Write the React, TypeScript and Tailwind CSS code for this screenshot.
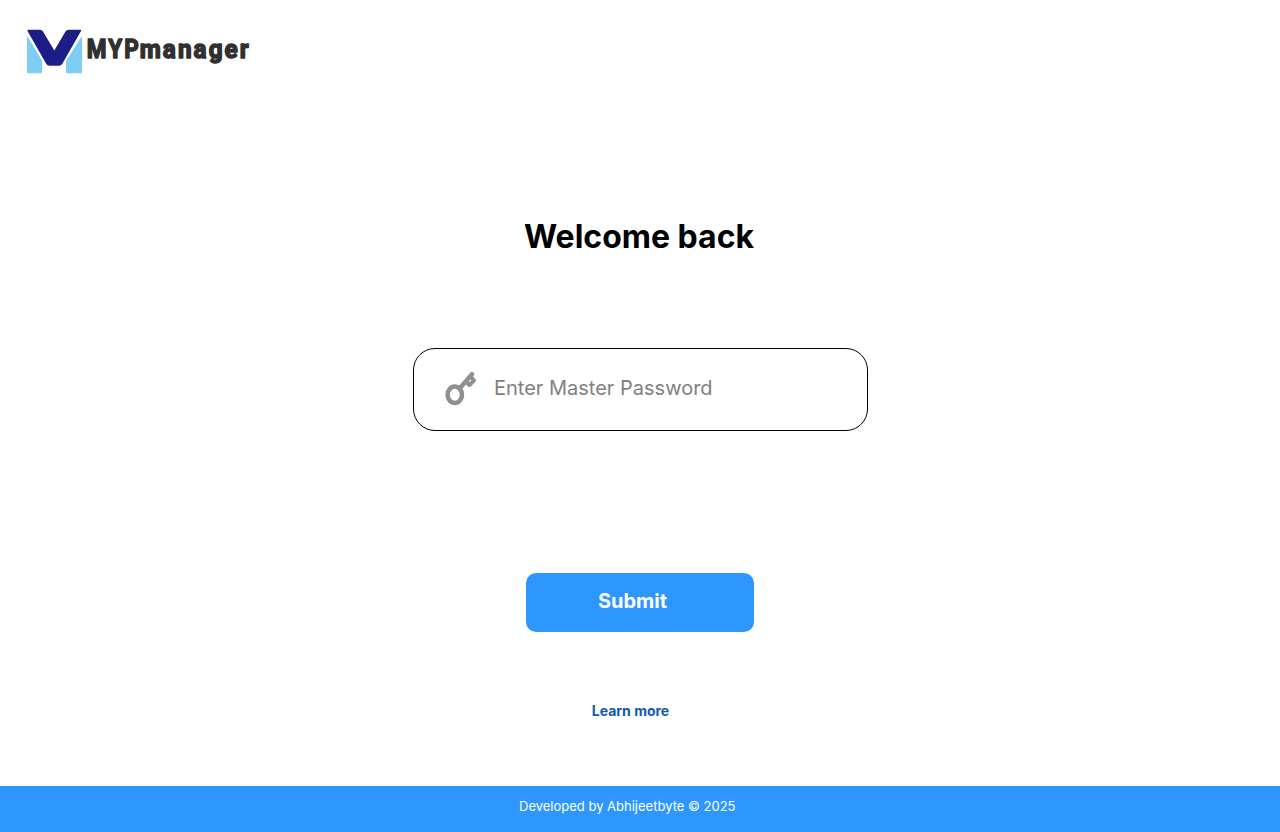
export default function App() {
  return (
    <div className="flex h-[832px] w-full flex-col items-center bg-white font-['Inter',sans-serif] text-black">
      <header className="h-[216px] w-full pl-[27px] pt-[29px]">
        <div className="flex items-start">
          <svg width="55" height="45" viewBox="0 0 55 45" aria-hidden="true">
            <path d="M0 7.500Q.7 7.500 1.200 8.500L15 31.500V43Q15 44.300 14 44.300H1Q0 44.300 0 43Z" fill="#7dcef4" />
            <path d="M55 7.500V43Q55 44.300 54 44.300H40Q39 44.300 39 43V32L54 8.500Z" fill="#7dcef4" />
            <path d="M1 .7H13Q15 .7 16 2.500L27.300 21.500L38.500 2.500Q39.600 .7 41.500 .7H53.500Q54.700 .7 54 2L35.500 34.500Q34.200 36.800 32 36.800H22.500Q20.300 36.800 19 34.500L.5 2Q-.1 .7 1 .7Z" fill="#1d1d87" />
          </svg>
          <svg width="180" height="50" viewBox="0 0 180 50" fill="#303030" stroke="#303030" strokeWidth="1.500" strokeLinejoin="round" className="overflow-visible font-['Roboto',sans-serif] text-[26.500px] font-bold">
            <text transform="translate(4.800 29.300) scale(.85 1)" textLength="61" lengthAdjust="spacing">MYP</text>
            <text transform="translate(57.700 29.300) scale(.92 1)" textLength="118.500" lengthAdjust="spacing">manager</text>
          </svg>
        </div>
      </header>
      <main className="flex w-full flex-col items-center">
        <h1 className="mr-[2px] h-[132px] text-[32px] leading-[41px] font-bold">Welcome back</h1>
        <label className="flex h-[83px] w-[455px] rounded-[22px] border border-black pl-[30px] pt-[22px]">
          <svg width="34" height="36" viewBox="0 0 34 36" fill="none" stroke="#909090" strokeWidth="4.500" strokeLinecap="round" strokeLinejoin="round" aria-hidden="true">
            <ellipse cx="10.800" cy="23.800" rx="7.200" ry="8.200" />
            <path d="M16 17L28 3.200" />
            <path d="M22 10.500L25.500 14L30 9.300L27 6.200" strokeWidth="4" />
          </svg>
          <input aria-label="Master password" placeholder="Enter Master Password" className="ml-[16.500px] h-[33px] w-[330px] text-[20px] outline-none placeholder:text-[#808080]" />
        </label>
        <button className="mt-[142px] h-[59px] w-[228px] rounded-[10px] bg-[#2e96ff] pb-1 pr-[15px] text-[20px] font-bold text-white">Submit</button>
        <a className="mr-[19px] mt-[69px] text-[14px] leading-5 font-bold text-[#0e5bac]">Learn more</a>
      </main>
      <footer className="mt-auto flex h-[46px] w-full justify-center bg-[#2e96ff] pr-[25.500px] pt-[10px] text-[13px] leading-5 text-white">Developed by Abhijeetbyte © 2025</footer>
    </div>
  );
}
